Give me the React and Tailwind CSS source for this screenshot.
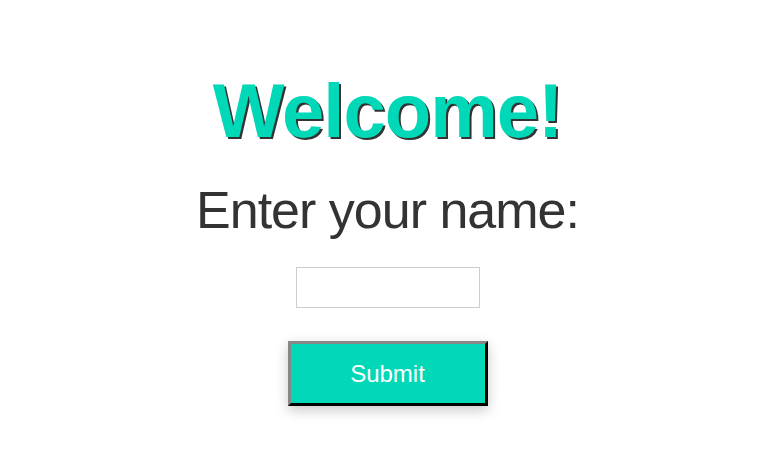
export default function App() {
  return (
    <div className="w-[775px] h-[474px] bg-white flex flex-col items-center">
      <h1
        className="mt-[67px] text-[76px] leading-[88px] font-bold text-[#00d8b8] tracking-[-1px] [text-shadow:2px_2px_0_#333] font-['Liberation_Sans',Arial,sans-serif]"
      >
        Welcome!
      </h1>
      <p className="mt-[25px] text-[52px] leading-[60px] tracking-[-1px] text-[#333] font-['Liberation_Sans',Arial,sans-serif]">
        Enter your name:
      </p>
      <input
        type="text"
        className="mt-[27px] w-[184px] h-[41px] border border-[#ccc] bg-white outline-none"
      />
      <button
        className="mt-[33px] w-[200px] h-[65px] bg-[#00d8b8] text-white text-[24px] font-['Liberation_Sans',Arial,sans-serif] border-[3px] border-t-[#888] border-l-[#888] border-b-black border-r-black shadow-[0_4px_12px_rgba(0,0,0,0.22)]"
      >
        Submit
      </button>
    </div>
  );
}
